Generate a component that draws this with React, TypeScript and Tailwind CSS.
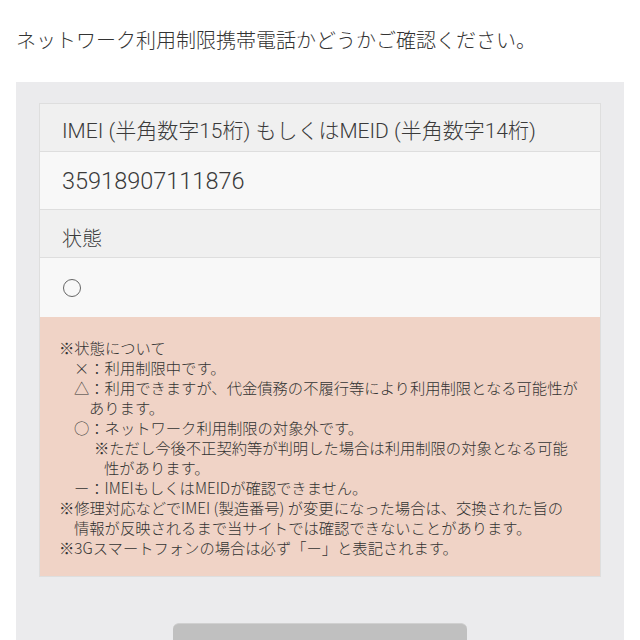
import React from "react";

const jp = { fontFamily: '"Noto Sans CJK JP", "Noto Sans", sans-serif' };
const mix = { fontFamily: 'Roboto, "Noto Sans CJK JP", sans-serif' };

function Line({ indent, children }: { indent: number; children: React.ReactNode }) {
  return (
    <div className="whitespace-nowrap" style={{ paddingLeft: indent }}>
      {children}
    </div>
  );
}

export default function App() {
  return (
    <div className="w-[640px] h-[640px] overflow-hidden bg-white" style={jp}>
      <div className="pt-[26px] pl-4 h-[82px] text-[20px] leading-[28px] font-light text-[#333] whitespace-nowrap">
        ネットワーク利用制限携帯電話かどうかご確認ください。
      </div>
      <div className="mx-4 bg-[#ebebed] pt-[21px] px-[23px] h-[600px]">
        <div className="border border-[#dedede]">
          <div
            className="bg-[#f0f0f0] border-b border-[#dedede] pl-[22px] pt-[16px] pb-[9px] h-[48px] text-[21px] leading-[22px] font-light text-[#3a3a3a] whitespace-nowrap"
            style={mix}
          >
            IMEI (半角数字15桁) もしくはMEID (半角数字14桁)
          </div>
          <div
            className="bg-[#f8f8f8] border-b border-[#dedede] pl-[22px] pt-[17px] h-[58px] text-[23.5px] leading-[24px] font-light text-[#3a3a3a]"
            style={mix}
          >
            35918907111876
          </div>
          <div
            className="bg-[#f0f0f0] border-b border-[#dedede] pl-[22px] pt-[18px] h-[48px] text-[20px] leading-[22px] font-light text-[#3a3a3a]"
            style={mix}
          >
            状態
          </div>
          <div className="bg-[#f8f8f8] h-[59px] pl-[23px] flex items-center">
            <div className="w-[18px] h-[18px] rounded-full border border-[#666]" />
          </div>
          <div className="bg-[#f0d3c6] pt-[20px] pb-[19px] pl-[19px] text-[15.3px] leading-[20px] font-light text-[#333]">
            <Line indent={0}>※状態について</Line>
            <Line indent={15}>×：利用制限中です。</Line>
            <Line indent={15}>△：利用できますが、代金債務の不履行等により利用制限となる可能性が</Line>
            <Line indent={30}>あります。</Line>
            <Line indent={15}>○：ネットワーク利用制限の対象外です。</Line>
            <Line indent={35}>※ただし今後不正契約等が判明した場合は利用制限の対象となる可能</Line>
            <Line indent={45}>性があります。</Line>
            <Line indent={15}>ー：IMEIもしくはMEIDが確認できません。</Line>
            <Line indent={0}>※修理対応などでIMEI (製造番号) が変更になった場合は、交換された旨の</Line>
            <Line indent={15}>情報が反映されるまで当サイトでは確認できないことがあります。</Line>
            <Line indent={0}>※3Gスマートフォンの場合は必ず「ー」と表記されます。</Line>
          </div>
        </div>
        <div className="mt-[46px] ml-[134px] w-[294px] h-[40px] rounded-[6px] bg-[#c0c0c0] border-t border-[#d0d0d0]" />
      </div>
    </div>
  );
}
